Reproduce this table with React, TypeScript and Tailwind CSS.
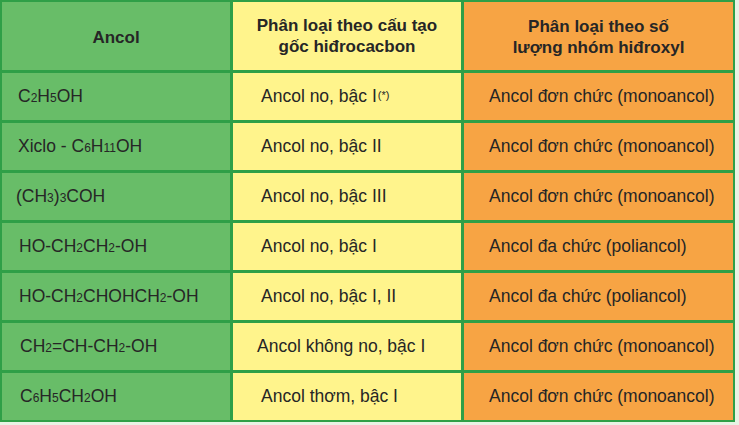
import React from "react";

const S = ({ children }: { children: React.ReactNode }) => (
  <span className="text-[12px]">{children}</span>
);

const rows: [React.ReactNode, React.ReactNode, string][] = [
  [<>C<S>2</S>H<S>5</S>OH</>, <>Ancol no, bậc I<sup className="text-[11px] relative -top-[3px] ml-[1px]">(*)</sup></>, "Ancol đơn chức (monoancol)"],
  [<>Xiclo - C<S>6</S>H<S>11</S>OH</>, <>Ancol no, bậc II</>, "Ancol đơn chức (monoancol)"],
  [<>(CH<S>3</S>)<S>3</S>COH</>, <>Ancol no, bậc III</>, "Ancol đơn chức (monoancol)"],
  [<>HO-CH<S>2</S>CH<S>2</S>-OH</>, <>Ancol no, bậc I</>, "Ancol đa chức (poliancol)"],
  [<>HO-CH<S>2</S>CHOHCH<S>2</S>-OH</>, <>Ancol no, bậc I, II</>, "Ancol đa chức (poliancol)"],
  [<>CH<S>2</S>=CH-CH<S>2</S>-OH</>, <>Ancol không no, bậc I</>, "Ancol đơn chức (monoancol)"],
  [<>C<S>6</S>H<S>5</S>CH<S>2</S>OH</>, <>Ancol thơm, bậc I</>, "Ancol đơn chức (monoancol)"],
];

const pad1 = ["pl-[16px]", "pl-[16px]", "pl-[14px]", "pl-[17px]", "pl-[17px]", "pl-[18px]", "pl-[18px]"];
const pad2 = ["pl-[28px]", "pl-[28px]", "pl-[28px]", "pl-[28px]", "pl-[28px]", "pl-[24px]", "pl-[28px]"];

export default function App() {
  return (
    <div className="w-[739px] h-[425px] bg-[#e8f3e4]" style={{ fontFamily: '"Liberation Sans", Arial, sans-serif' }}>
      <div className="w-[735px] bg-[#2f9f47] p-[2px] grid grid-cols-[228px_228px_269px] gap-[3px] text-[#262626] text-[17.5px]">
        <div className="h-[68px] bg-[#68bd68] flex items-center justify-center font-bold text-[17px] pt-[4px]">Ancol</div>
        <div className="h-[68px] bg-[#fff48c] flex items-center justify-center text-center font-bold text-[17px] leading-[21px]">
          Phân loại theo cấu tạo<br />gốc hiđrocacbon
        </div>
        <div className="h-[68px] bg-[#f7a444] flex items-center justify-center text-center font-bold text-[17px] leading-[21px] pt-[2px]">
          Phân loại theo số<br />lượng nhóm hiđroxyl
        </div>
        {rows.map((r, i) => (
          <React.Fragment key={i}>
            <div className={`h-[47px] bg-[#68bd68] flex items-center ${pad1[i]}`}>
              <span>{r[0]}</span>
            </div>
            <div className={`h-[47px] bg-[#fff48c] flex items-center ${pad2[i]}`}>
              <span>{r[1]}</span>
            </div>
            <div className="h-[47px] bg-[#f7a444] flex items-center pl-[25px]">
              <span>{r[2]}</span>
            </div>
          </React.Fragment>
        ))}
      </div>
    </div>
  );
}
